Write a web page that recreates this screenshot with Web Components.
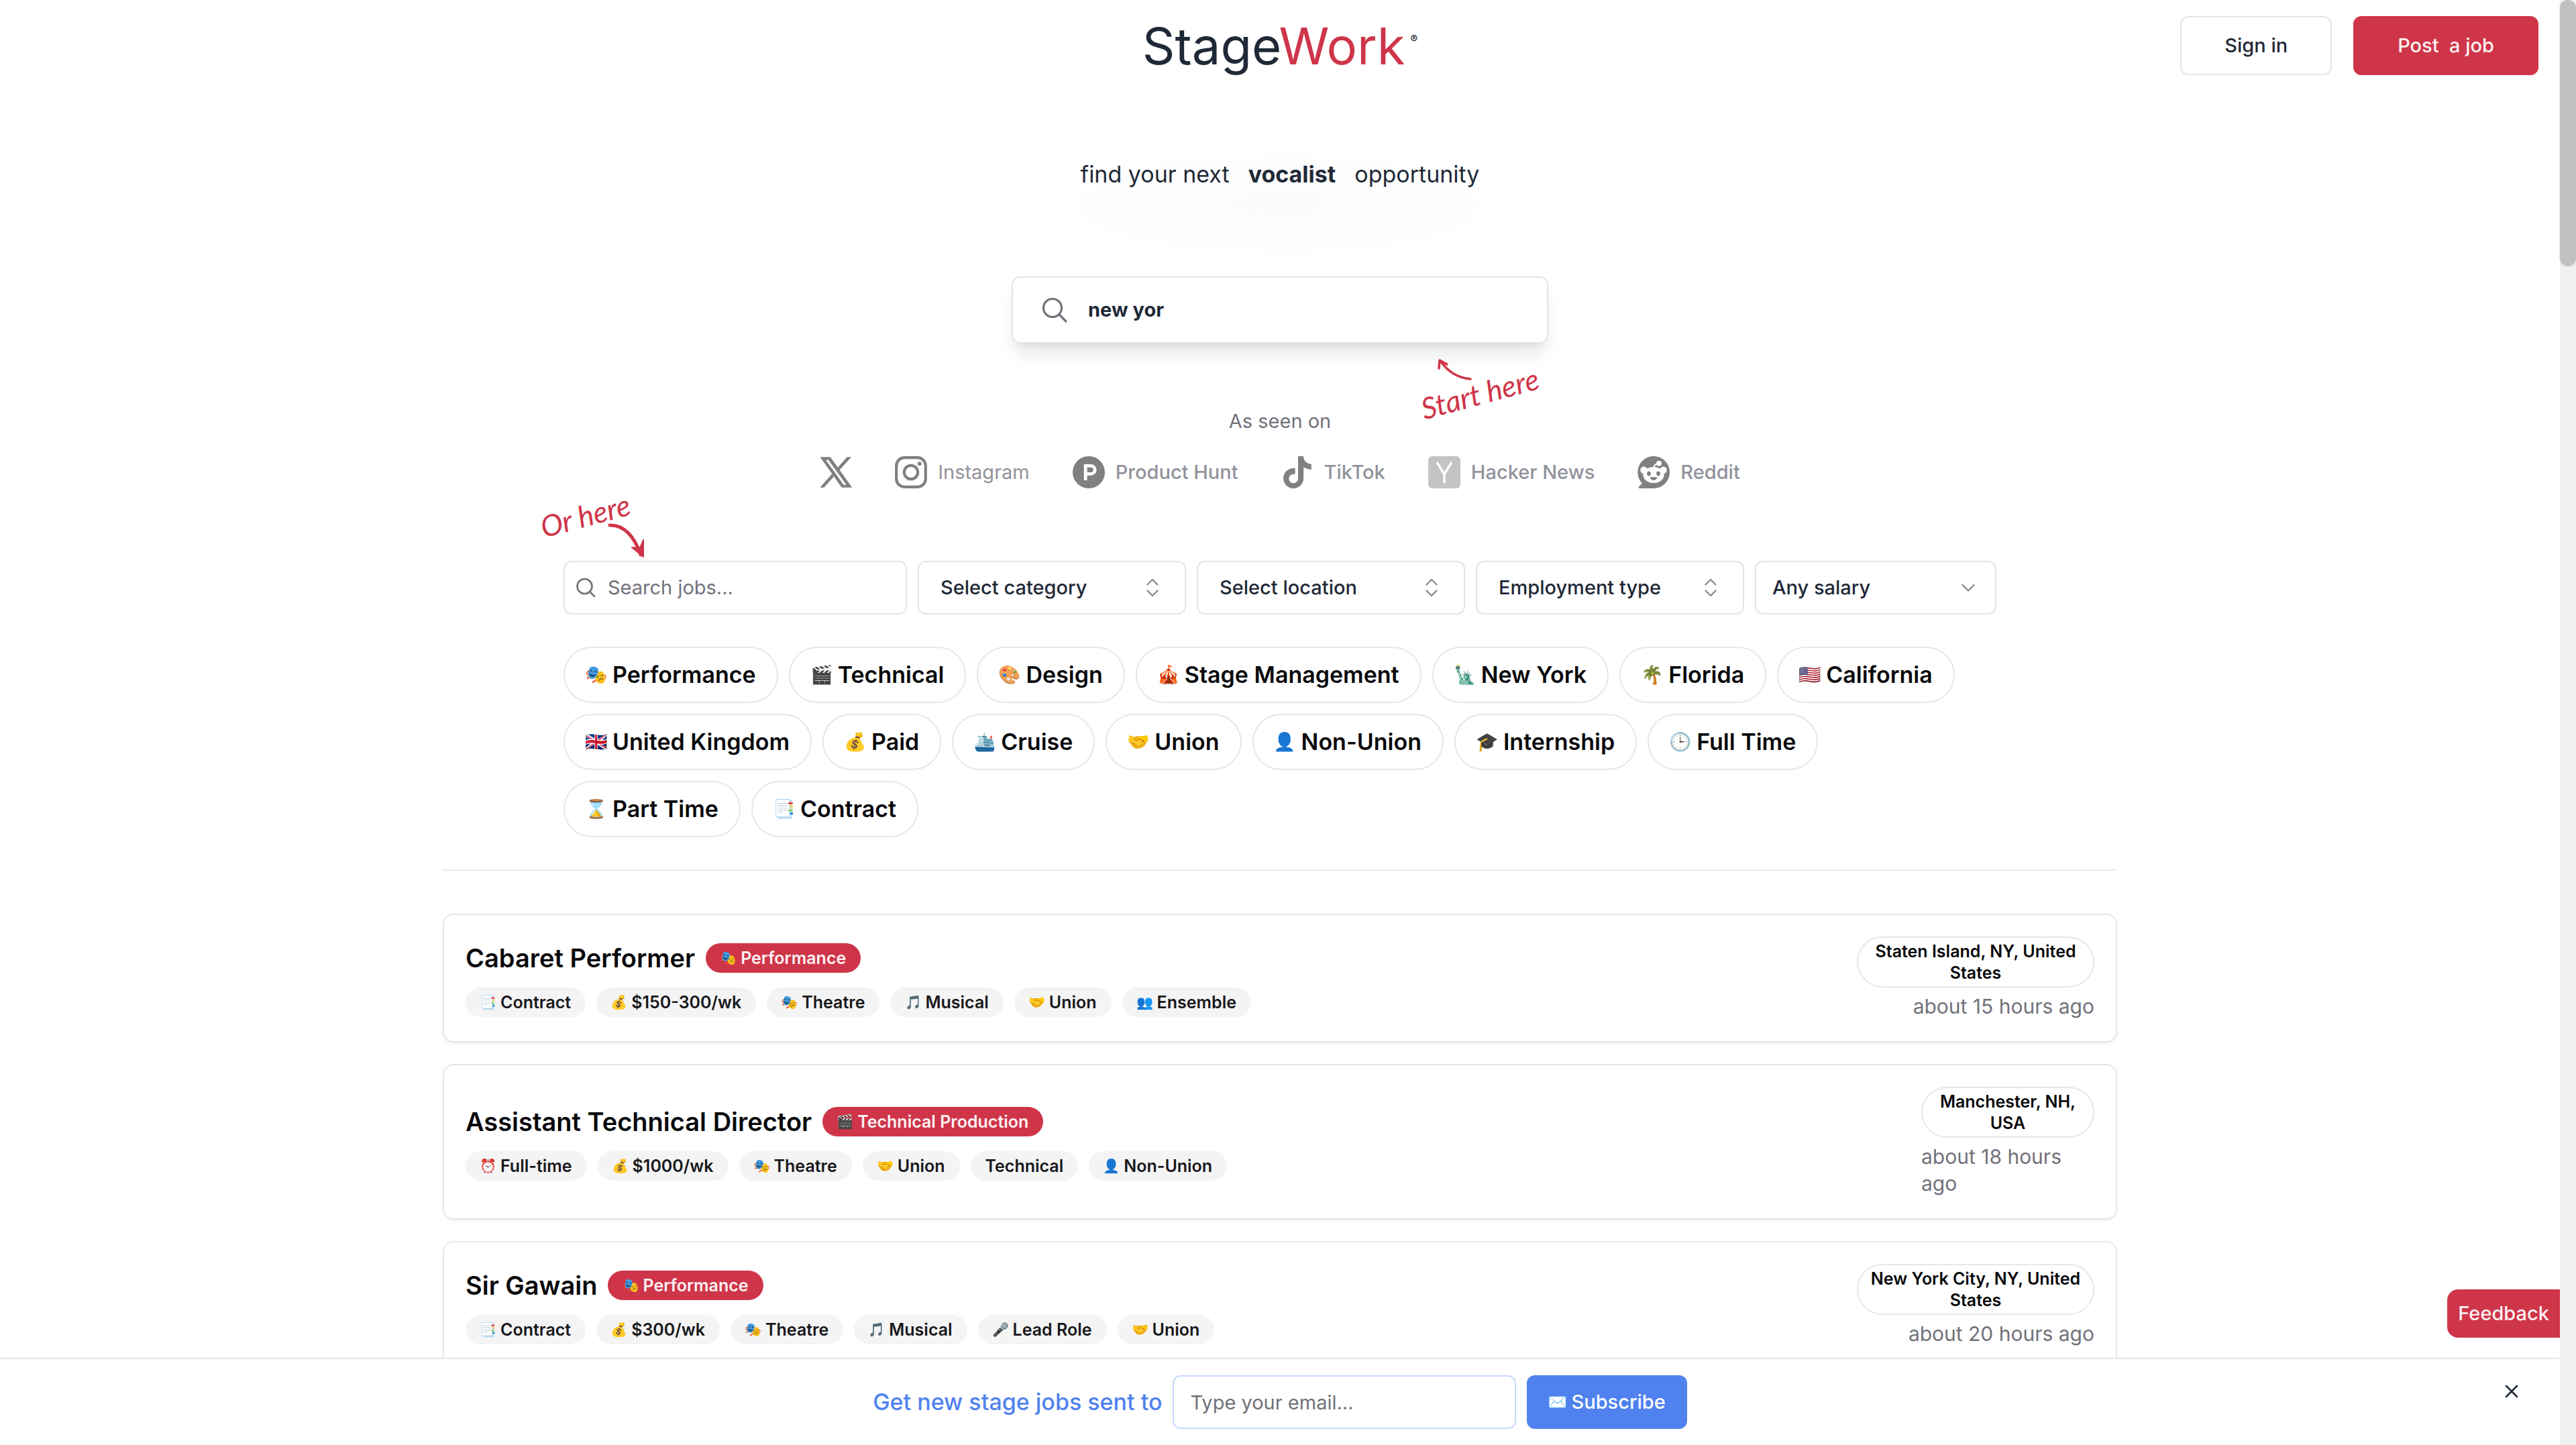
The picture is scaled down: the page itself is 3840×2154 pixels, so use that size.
<!DOCTYPE html>
<html lang="en">
<head>
<meta charset="utf-8">
<title>StageWork</title>
<meta name="viewport" content="width=device-width, initial-scale=1">
<style>
  :root {
    --red: #cf3549; --blush: #fdf0f1; --ink: #1f2937; --black: #09090b;
    --muted: #71717a; --line: #e5e7eb; --field: #e4e4e7; --blue: #4f82ee;
    --bar: 24px;
  }
  body {
    margin: 0; padding-right: var(--bar); background: #fff; color: var(--ink);
    font-family: Inter, "Open Sans", sans-serif; font-size: 29px; line-height: 40px;
    height: 100vh; overflow: hidden; box-sizing: border-box;
  }
</style>
</head>
<body>
<stage-app></stage-app>

<script>
const base = `*,*::before,*::after{box-sizing:border-box}
button,input,select{font:inherit;color:inherit;margin:0}
svg{display:block;flex:none}`;

function define(name, css, html) {
  const template = document.createElement('template');
  template.innerHTML = `<style>${base}${css}</style>${html}`;
  customElements.define(name, class extends HTMLElement {
    constructor() {
      super();
      this.attachShadow({ mode: 'open' }).append(template.content.cloneNode(true));
    }
    connectedCallback() {
      this.shadowRoot.querySelectorAll('[data-attr]').forEach(el => {
        const value = this.getAttribute(el.dataset.attr);
        if (value === null) el.remove(); else el.textContent = value;
      });
      this.shadowRoot.querySelectorAll('[data-label]').forEach(el =>
        el.setAttribute('aria-label', this.getAttribute('label') || ''));
    }
  });
}

/* Emoji in a square box, sized by --emoji */
const emojiCss = `.emoji{width:var(--emoji);flex:none;overflow:hidden;display:flex;justify-content:center;white-space:nowrap}
.emoji span{font-size:calc(var(--emoji) * .84);font-family:"Noto Color Emoji",sans-serif}`;
const emoji = `<span class="emoji"><span data-attr="icon"></span></span>`;

define('site-header', `
  :host{display:grid;grid-template-columns:1fr auto 1fr;align-items:center;padding:24px 32px}
  .logo{grid-column:2;display:flex;align-items:flex-start;gap:8px;color:inherit;text-decoration:none;font-size:76px;line-height:84px}
  .logo b{font-weight:400;color:var(--red)}
  sup{font-size:16px;line-height:24px;margin-top:20px;font-weight:600}
  nav{justify-self:end;display:flex;gap:32px}
  button{height:88px;border-radius:12px;border:2px solid var(--field);background:#fff;padding:0 64px;font-weight:500;white-space:pre}
  .primary{background:var(--red);border-color:var(--red);color:var(--blush)}`,
  `<a class="logo" href="#"><span>Stage<b>Work</b></span><sup>®</sup></a>
   <nav><button>Sign in</button><button class="primary">Post  a job</button></nav>`);

define('hand-note', `
  :host{position:absolute;color:var(--red)}
  span{display:block;font:italic 400 44px/48px Lato,sans-serif;rotate:-15deg;white-space:nowrap}`,
  `<span><slot></slot></span><slot name="arrow"></slot>`);

define('hero-search', `
  :host{display:flex;flex-direction:column;align-items:center;padding-top:100px}
  p{margin:0;display:flex;gap:28px;font-size:34px;line-height:48px;padding:0 28px}
  .glow{display:flex;justify-content:center;width:720px;margin:-20px 0 -108px;padding:20px 0 108px;background:radial-gradient(closest-side,#fbfbfb,#fdfdfd 60%,#fff0)}
  .glow p{white-space:nowrap}
  form{position:relative;margin-top:128px;width:800px}
  label{display:flex;align-items:center;gap:30px;height:100px;padding:0 42px;border:2px solid var(--field);border-radius:12px;background:#fff;
    box-shadow:0 20px 30px -6px #0000001a,0 8px 12px -8px #0000001a}
  input{border:0;outline:0;background:none;flex:1;min-width:0;padding:0;font-weight:700}
  svg.glass{color:var(--muted)}
  hand-note{left:608px;top:150px}
  .up{position:absolute;left:26px;top:-28px}`,
  `<div class="glow"><p><span>find your next</span><b>vocalist</b><span>opportunity</span></p></div>
   <form><label>
     <svg class="glass" width="40" height="40" viewBox="0 0 40 40" fill="none" stroke="currentColor" stroke-width="3.2" stroke-linecap="round"><circle cx="17" cy="17" r="13.5"/><path d="M27 27l10 10"/></svg>
     <input type="text" value="new yor" aria-label="Search"></label>
     <hand-note>Start here
       <svg slot="arrow" class="up" width="56" height="36" viewBox="0 0 56 36" fill="none" stroke="currentColor" stroke-width="3.6" stroke-linecap="round" stroke-linejoin="round"><path d="M50 31C32 29 18 22 5 4M3 15L4 3l11 6"/></svg>
     </hand-note>
   </form>`);

define('brand-item', `
  :host{display:flex;align-items:center;gap:16px;color:#92929c;font-weight:500;white-space:nowrap}
  ::slotted(svg){display:block;flex:none;color:#808080}`,
  `<slot name="logo"></slot><slot></slot>`);

define('seen-on', `
  :host{display:flex;flex-direction:column;align-items:center;gap:32px;margin-top:96px;color:var(--muted)}
  p{margin:0}
  .row{display:flex;justify-content:center;gap:64px;height:48px}
  i{font-style:normal;font-weight:400}`,
  `<p>As seen on</p>
  <div class="row">
   <brand-item aria-label="X"><svg slot="logo" width="48" height="48" viewBox="0 0 24 24" fill="currentColor"><path d="M14.3 10.2 22.6 1h-2l-7.2 8L7.700 1H1l8.700 12.200L1 23h2l7.600-8.500L16.600 23h6.700zM11.600 13.200l-.9-1.200L3.700 2.500h3l5.700 7.900.9 1.200 7.300 10.200h-3z" stroke="currentColor" stroke-width=".8"/></svg></brand-item>
   <brand-item><svg slot="logo" width="48" height="48" viewBox="0 0 24 24" fill="none" stroke="currentColor" stroke-width="2.1"><rect x="1.100" y="1.100" width="21.800" height="21.800" rx="6"/><circle cx="12" cy="12" r="5.100"/><circle cx="18.400" cy="5.600" r="1.440" fill="currentColor" stroke="none"/></svg><i>Instagram</i></brand-item>
   <brand-item><svg slot="logo" width="48" height="48" viewBox="0 0 24 24"><circle cx="12" cy="12" r="12" fill="currentColor"/><path d="M8.400 6h5.200a4.200 4.200 0 0 1 0 8.400h-2.800V18H8.400zM10.800 8.400V12h2.800a1.800 1.800 0 0 0 0-3.600z" fill="#fff"/></svg>Product Hunt</brand-item>
   <brand-item><svg slot="logo" width="48" height="48" viewBox="0 0 24 24" fill="currentColor"><path d="M12.525.02c1.310-.02 2.610-.01 3.910-.02.080 1.530.630 3.090 1.750 4.170 1.120 1.110 2.700 1.620 4.240 1.790v4.030c-1.440-.050-2.890-.350-4.200-.970-.570-.260-1.100-.590-1.620-.930-.010 2.920.010 5.840-.020 8.750-.080 1.400-.540 2.790-1.350 3.940-1.310 1.920-3.580 3.170-5.910 3.210-1.430.080-2.860-.310-4.080-1.030-2.020-1.190-3.440-3.370-3.650-5.710-.020-.5-.030-1-.010-1.490.180-1.900 1.120-3.720 2.580-4.960 1.660-1.440 3.980-2.130 6.150-1.720.020 1.480-.040 2.960-.040 4.440-.990-.320-2.150-.230-3.020.370-.630.410-1.110 1.040-1.360 1.750-.210.510-.150 1.070-.140 1.610.240 1.640 1.820 3.020 3.500 2.870 1.120-.010 2.190-.660 2.770-1.610.190-.330.400-.670.410-1.060.100-1.790.060-3.570.070-5.360.010-4.030-.010-8.050.020-12.070z"/></svg>TikTok</brand-item>
   <brand-item><svg slot="logo" width="48" height="48" viewBox="0 0 48 48"><rect width="48" height="48" rx="6" fill="#c4c4c4"/><path d="M13 9l11 18L35 9M24 27v13" fill="none" stroke="#fff" stroke-width="3.400"/></svg>Hacker News</brand-item>
   <brand-item><svg slot="logo" width="48" height="48" viewBox="0 0 24 24"><path d="M12 0a12 12 0 1 1 0 24H1.800c-.9 0-1.200-.8-.7-1.300l2.300-2.500A12 12 0 0 1 12 0z" fill="currentColor"/><g fill="#fff"><circle cx="4.700" cy="10.400" r="2.600"/><circle cx="19.300" cy="10.400" r="2.600"/><ellipse cx="12" cy="14" rx="7.800" ry="6"/><circle cx="16" cy="5.400" r="2"/></g><path d="M12.400 8.400c0-1.700 1-2.600 2.600-2.700" fill="none" stroke="#fff" stroke-width="1"/><g fill="currentColor"><ellipse cx="8.500" cy="13" rx="1.400" ry="1.700"/><ellipse cx="15.500" cy="13" rx="1.400" ry="1.700"/><path d="M9.300 15.600h5.400c-.2 1.400-1.300 2.300-2.700 2.300s-2.500-.9-2.700-2.300z"/></g></svg>Reddit</brand-item>
  </div>`);

define('filter-select', `
  :host{display:grid;position:relative;align-items:center;min-width:0}
  select{appearance:none;height:80px;width:100%;border:2px solid var(--field);border-radius:12px;background:#fff;padding:0 72px 0 var(--pad,32px);font-weight:500}
  svg{position:absolute;right:calc(var(--pad,32px) + 2px);color:#8a8a92;pointer-events:none}
  .one{display:none}
  :host([single]) .one{display:block}
  :host([single]) .two{display:none}
  :host([single]){--pad:24px}`,
  `<select data-label><option data-attr="label"></option></select>
   <svg class="two" width="32" height="32" viewBox="0 0 32 32" fill="none" stroke="currentColor" stroke-width="2.400" stroke-linecap="round" stroke-linejoin="round"><path d="M8.500 11.500L16 4l7.500 7.500M8.500 20.500L16 28l7.500-7.500"/></svg>
   <svg class="one" width="32" height="32" viewBox="0 0 32 32" fill="none" stroke="currentColor" stroke-width="2.400" stroke-linecap="round" stroke-linejoin="round"><path d="M7.500 12L16 20.500 24.500 12"/></svg>`);

define('filter-bar', `
  :host{display:grid;grid-template-columns:512fr 400fr 400fr 400fr 360fr;gap:16px;position:relative}
  label{display:flex;align-items:center;gap:18px;min-width:0;height:80px;border:2px solid var(--field);border-radius:12px;padding:0 16px;color:var(--muted)}
  input{border:0;outline:0;background:none;flex:1;min-width:0;padding:0}
  input::placeholder{color:var(--muted);opacity:1}
  hand-note{left:-36px;top:-92px}
  .down{position:absolute;left:100px;top:34px}`,
  `<label><svg width="30" height="30" viewBox="0 0 30 30" fill="none" stroke="currentColor" stroke-width="2.600" stroke-linecap="round"><circle cx="13.500" cy="13" r="11"/><path d="M22 22l6 6"/></svg>
    <input type="text" placeholder="Search jobs..." aria-label="Search jobs"></label>
   <filter-select label="Select category"></filter-select>
   <filter-select label="Select location"></filter-select>
   <filter-select label="Employment type"></filter-select>
   <filter-select label="Any salary" single></filter-select>
   <hand-note>Or here
     <svg slot="arrow" class="down" width="60" height="56" viewBox="0 0 60 56"><path d="M5 5C26 4 42 22 51 49" fill="none" stroke="currentColor" stroke-width="5" stroke-linecap="round"/><path d="M38 38l17 14V27l-5 12z" fill="currentColor" stroke="currentColor" stroke-width="2" stroke-linejoin="round"/></svg>
   </hand-note>`);

define('filter-pill', `${emojiCss}
  :host{display:block;--emoji:32px}
  button{display:flex;align-items:center;gap:8px;height:84px;border:2px solid var(--line);border-radius:42px;background:#fff;padding:0 31px;color:var(--black);font-size:34px;line-height:48px;font-weight:600;white-space:nowrap}`,
  `<button>${emoji}<slot></slot></button>`);

define('pill-list', `:host{display:flex;flex-wrap:wrap;gap:16px;margin-top:48px}`, `<slot></slot>`);

define('job-tag', `${emojiCss}
  :host{--emoji:24px;display:flex;align-items:center;gap:6px;height:44px;border-radius:22px;padding:0 22px;background:#f4f4f5;color:#18181b;font-size:25px;line-height:32px;font-weight:600;white-space:nowrap}
  :host([tone=red]){background:var(--red);color:var(--blush)}
  :host(:not([icon])) .emoji{display:none}`,
  `${emoji}<slot></slot>`);

define('job-card', `
  :host{display:flex;justify-content:space-between;align-items:center;gap:32px;padding:32px;border:2px solid var(--line);border-radius:16px;background:#fff;box-shadow:0 2px 4px #0000000d}
  .main{display:flex;flex-direction:column;gap:16px}
  .head{display:flex;align-items:center;gap:16px}
  h2{margin:0;font-size:38px;line-height:56px;font-weight:600;color:var(--black)}
  .tags{display:flex;flex-wrap:wrap;gap:16px}
  aside{display:flex;flex-direction:column;align-items:flex-end;gap:8px;width:354px}
  .place{width:100%;border:2px solid var(--line);border-radius:38px;padding:4px 16px;text-align:center;color:var(--black);font-size:25px;line-height:32px;font-weight:600}
  time{color:var(--muted);font-size:30px}
  :host([narrow]) aside{width:258px}`,
  `<div class="main"><div class="head"><h2 data-attr="name"></h2><slot name="category"></slot></div>
   <div class="tags"><slot></slot></div></div>
   <aside><div class="place" data-attr="place"></div><time data-attr="age"></time></aside>`);

define('subscribe-bar', `${emojiCss}
  :host{--emoji:28px;position:fixed;left:0;right:var(--bar);bottom:0;display:flex;justify-content:center;background:#fff;border-top:2px solid var(--line);padding:24px}
  form{display:flex;align-items:center;gap:16px}
  label{color:var(--blue);font-size:34px;line-height:48px;font-weight:500}
  input{width:512px;height:80px;border:2px solid #c8dafd;border-radius:12px;padding:0 24px;background:#fff}
  input::placeholder{color:var(--muted);opacity:1}
  .go{display:flex;align-items:center;gap:6px;height:80px;border:0;border-radius:12px;padding:0 32px;background:var(--blue);color:#fff;font-weight:500}
  .close{position:absolute;right:54px;top:30px;width:36px;height:36px;padding:8px;border:0;background:none}`,
  `<form><label for="email">Get new stage jobs sent to</label>
    <input id="email" type="email" placeholder="Type your email...">
    <button class="go" type="button"><span class="emoji"><span>✉️</span></span>Subscribe</button></form>
   <button class="close" aria-label="Close"><svg width="20" height="20" viewBox="0 0 20 20" stroke="currentColor" stroke-width="2.600" stroke-linecap="round"><path d="M2 2l16 16M18 2L2 18"/></svg></button>`);

define('feedback-tab', `
  :host{position:fixed;right:var(--bar);bottom:160px}
  button{height:72px;border:0;border-radius:16px 0 0 16px;padding:0 16px;background:var(--red);color:var(--blush);font-weight:500}`,
  `<button>Feedback</button>`);

define('page-scroll', `
  :host{position:fixed;top:0;right:0;bottom:0;width:var(--bar);background:#f0f0f0}
  div{height:396px;border-radius:12px;background:#c1c1c1;box-shadow:0 1px 3px #0003}`, `<div></div>`);

define('stage-app', `
  :host{display:block}
  main{max-width:2496px;margin:0 auto}
  .filters{max-width:2136px;margin:108px auto 0}
  hr{border:0;height:2px;background:var(--line);margin:48px 0 64px}
  .jobs{display:flex;flex-direction:column;gap:32px}`,
  `<site-header></site-header>
  <main>
    <hero-search></hero-search>
    <seen-on></seen-on>
    <div class="filters">
      <filter-bar></filter-bar>
      <pill-list>
        <filter-pill icon="🎭">Performance</filter-pill><filter-pill icon="🎬">Technical</filter-pill>
        <filter-pill icon="🎨">Design</filter-pill><filter-pill icon="🎪">Stage Management</filter-pill>
        <filter-pill icon="🗽">New York</filter-pill><filter-pill icon="🌴">Florida</filter-pill>
        <filter-pill icon="🇺🇸">California</filter-pill><filter-pill icon="🇬🇧">United Kingdom</filter-pill>
        <filter-pill icon="💰">Paid</filter-pill><filter-pill icon="🛳️">Cruise</filter-pill>
        <filter-pill icon="🤝">Union</filter-pill><filter-pill icon="👤">Non-Union</filter-pill>
        <filter-pill icon="🎓">Internship</filter-pill><filter-pill icon="🕒">Full Time</filter-pill>
        <filter-pill icon="⌛">Part Time</filter-pill><filter-pill icon="📑">Contract</filter-pill>
      </pill-list>
    </div>
    <hr>
    <div class="jobs">
      <job-card name="Cabaret Performer" place="Staten Island, NY, United States" age="about 15 hours ago">
        <job-tag slot="category" tone="red" icon="🎭">Performance</job-tag>
        <job-tag icon="📑">Contract</job-tag><job-tag icon="💰">$150-300/wk</job-tag><job-tag icon="🎭">Theatre</job-tag>
        <job-tag icon="🎵">Musical</job-tag><job-tag icon="🤝">Union</job-tag><job-tag icon="👥">Ensemble</job-tag>
      </job-card>
      <job-card narrow name="Assistant Technical Director" place="Manchester, NH, USA" age="about 18 hours ago">
        <job-tag slot="category" tone="red" icon="🎬">Technical Production</job-tag>
        <job-tag icon="⏰">Full-time</job-tag><job-tag icon="💰">$1000/wk</job-tag><job-tag icon="🎭">Theatre</job-tag>
        <job-tag icon="🤝">Union</job-tag><job-tag>Technical</job-tag><job-tag icon="👤">Non-Union</job-tag>
      </job-card>
      <job-card name="Sir Gawain" place="New York City, NY, United States" age="about 20 hours ago">
        <job-tag slot="category" tone="red" icon="🎭">Performance</job-tag>
        <job-tag icon="📑">Contract</job-tag><job-tag icon="💰">$300/wk</job-tag><job-tag icon="🎭">Theatre</job-tag>
        <job-tag icon="🎵">Musical</job-tag><job-tag icon="🎤">Lead Role</job-tag><job-tag icon="🤝">Union</job-tag>
      </job-card>
    </div>
  </main>
  <feedback-tab></feedback-tab>
  <subscribe-bar></subscribe-bar>
  <page-scroll aria-hidden="true"></page-scroll>`);
</script>
</body>
</html>
